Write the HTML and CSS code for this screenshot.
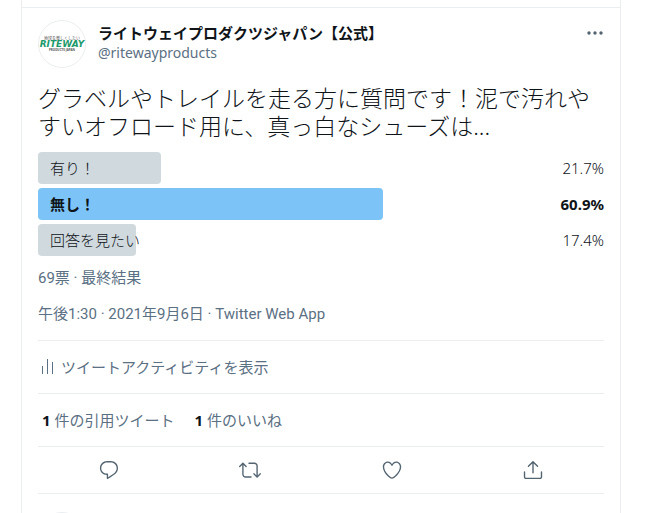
FILE: index.html
```
<!DOCTYPE html>
<html lang="ja">
<head>
    <meta charset="UTF-8">
    <meta name="viewport" content="width=device-width, initial-scale=1.0">
    <title>ツイート</title>
    <link rel="stylesheet" href="styles.css">
</head>
<body>
    <main class="timeline">
        <article class="tweet">
            <!-- Author -->
            <header class="tweet-header">
                <a href="#" class="avatar" aria-label="RITEWAY">
                    <svg viewBox="0 0 48 48">
                        <circle cx="24" cy="24" r="23.5" fill="#fff" stroke="#ebeef0"/>
                        <text class="logo-tagline" x="24" y="20" text-anchor="middle">地球を楽しくしたい</text>
                        <text class="logo-name" x="24" y="27" text-anchor="middle">RITEWAY</text>
                        <text class="logo-sub" x="24" y="31" text-anchor="middle">PRODUCTS JAPAN</text>
                    </svg>
                </a>
                <div class="author">
                    <a href="#" class="author-name">ライトウェイプロダクツジャパン【公式】</a>
                    <a href="#" class="author-handle">@ritewayproducts</a>
                </div>
                <button class="icon-btn more-btn" aria-label="もっと見る">
                    <svg viewBox="0 0 18 18">
                        <circle cx="3" cy="9" r="1.7"/>
                        <circle cx="9" cy="9" r="1.7"/>
                        <circle cx="15" cy="9" r="1.7"/>
                    </svg>
                </button>
            </header>

            <p class="tweet-text">グラベルやトレイルを走る方に質問です！泥で汚れやすいオフロード用に、真っ白なシューズは...</p>

            <!-- Poll results -->
            <div class="poll">
                <div class="poll-row">
                    <div class="poll-bar" style="width: 21.7%">有り！</div>
                    <span>21.7%</span>
                </div>
                <div class="poll-row winner">
                    <div class="poll-bar" style="width: 60.9%">無し！</div>
                    <span>60.9%</span>
                </div>
                <div class="poll-row">
                    <div class="poll-bar" style="width: 17.4%">回答を見たい</div>
                    <span>17.4%</span>
                </div>
            </div>
            <p class="meta">69票 · 最終結果</p>
            <p class="meta tweet-date"><a href="#">午後1:30 · 2021年9月6日</a> · <a href="#">Twitter Web App</a></p>

            <a href="#" class="activity">
                <svg viewBox="0 0 20 20">
                    <path d="M4.5 9v8M9.5 2v15M14.5 5v12"/>
                </svg>
                ツイートアクティビティを表示
            </a>

            <div class="stats">
                <a href="#"><strong>1</strong> 件の引用ツイート</a>
                <a href="#"><strong>1</strong> 件のいいね</a>
            </div>

            <!-- Actions -->
            <div class="actions">
                <button class="icon-btn" aria-label="返信">
                    <svg viewBox="0 0 24 24"><path d="M14.046 2.242l-4.148-.01h-.002c-4.374 0-7.8 3.427-7.8 7.802 0 4.098 3.186 7.206 7.465 7.37v3.828c0 .108.044.286.12.403.142.225.384.347.632.347.138 0 .277-.038.402-.118.264-.168 6.473-4.14 8.088-5.506 1.902-1.61 3.04-3.97 3.043-6.312v-.017c-.006-4.367-3.43-7.787-7.8-7.788zm3.787 12.972c-1.134.96-4.862 3.405-6.772 4.643V16.67c0-.414-.335-.75-.75-.75h-.396c-3.66 0-6.318-2.476-6.318-5.886 0-3.534 2.768-6.302 6.3-6.302l4.147.01h.002c3.532 0 6.3 2.766 6.302 6.296-.003 1.91-.942 3.844-2.514 5.176z"/></svg>
                </button>
                <button class="icon-btn" aria-label="リツイート">
                    <svg viewBox="0 0 24 24"><path d="M23.77 15.67c-.292-.293-.767-.293-1.06 0l-2.22 2.22V7.65c0-2.068-1.683-3.75-3.75-3.75h-5.85c-.414 0-.75.336-.75.75s.336.75.75.75h5.85c1.24 0 2.25 1.01 2.25 2.25v10.24l-2.22-2.22c-.293-.293-.768-.293-1.06 0s-.294.768 0 1.06l3.5 3.5c.145.147.337.22.53.22s.383-.072.53-.22l3.5-3.5c.294-.292.294-.767 0-1.06zm-10.66 3.28H7.26c-1.24 0-2.25-1.01-2.25-2.25V6.46l2.22 2.22c.148.147.34.22.532.22s.384-.073.53-.22c.293-.293.293-.768 0-1.06l-3.5-3.5c-.293-.294-.768-.294-1.06 0l-3.5 3.5c-.294.292-.294.767 0 1.06s.767.293 1.06 0l2.22-2.22V16.7c0 2.068 1.683 3.75 3.75 3.75h5.85c.414 0 .75-.336.75-.75s-.337-.75-.75-.75z"/></svg>
                </button>
                <button class="icon-btn" aria-label="いいね">
                    <svg viewBox="0 0 24 24"><path d="M12 21.638h-.014C9.403 21.59 1.95 14.856 1.95 8.478c0-3.064 2.525-5.754 5.403-5.754 2.29 0 3.83 1.58 4.646 2.73.814-1.148 2.354-2.73 4.645-2.73 2.88 0 5.404 2.69 5.404 5.755 0 6.376-7.454 13.11-10.037 13.157H12zM7.354 4.225c-2.08 0-3.903 1.988-3.903 4.255 0 5.74 7.034 11.596 8.55 11.658 1.518-.062 8.55-5.917 8.55-11.658 0-2.267-1.823-4.255-3.903-4.255-2.528 0-3.94 2.936-3.952 2.965-.23.562-1.156.562-1.387 0-.014-.03-1.425-2.965-3.954-2.965z"/></svg>
                </button>
                <button class="icon-btn" aria-label="共有">
                    <svg viewBox="0 0 24 24"><path d="M17.53 7.47l-5-5c-.293-.293-.768-.293-1.06 0l-5 5c-.294.293-.294.768 0 1.06s.767.294 1.06 0l3.72-3.72V15c0 .414.336.75.75.75s.75-.336.75-.75V4.81l3.72 3.72c.146.147.338.22.53.22s.384-.072.53-.22c.293-.293.293-.767 0-1.06z"/><path d="M19.708 21.944H4.292C3.028 21.944 2 20.916 2 19.652V14c0-.414.336-.75.75-.75s.75.336.75.75v5.652c0 .437.355.792.792.792h15.416c.437 0 .792-.355.792-.792V14c0-.414.336-.75.75-.75s.75.336.75.75v5.652c0 1.264-1.028 2.292-2.292 2.292z"/></svg>
                </button>
            </div>
        </article>

        <div class="reply-box">
            <div class="reply-avatar"></div>
        </div>
    </main>
</body>
</html>
```
FILE: styles.css
```
* {
    margin: 0;
    padding: 0;
    box-sizing: border-box;
}

html {
    overflow: hidden;
}

body {
    font-family: "Noto Sans", "Noto Sans CJK JP", sans-serif;
    font-size: 15px;
    line-height: 20px;
    color: #0f1419;
    background: #fff;
    padding: 0 24px 0 21px;
}

a {
    color: inherit;
    text-decoration: none;
}

.timeline {
    border: 1px solid #ebeef0;
    border-top: none;
    border-bottom: none;
    padding-top: 7px;
}

.tweet {
    border-top: 1px solid #ebeef0;
    padding: 12px 16px 0;
}

.tweet-header {
    display: flex;
    gap: 12px;
}

.avatar svg {
    display: block;
    width: 48px;
    height: 48px;
}

.logo-tagline {
    font-size: 4px;
    fill: #555;
}

.logo-name {
    font-family: "DejaVu Sans", Verdana, sans-serif;
    font-size: 9px;
    font-weight: bold;
    font-style: italic;
    fill: #1d9a6c;
}

.logo-sub {
    font-size: 3px;
    font-weight: bold;
    fill: #555;
}

.author {
    display: flex;
    flex-direction: column;
    flex: 1;
    padding-top: 3px;
}

.author-name {
    font-weight: bold;
}

.author-handle {
    font-size: 14px;
    color: #5b7083;
}

.icon-btn {
    border: none;
    background: none;
    cursor: pointer;
}

.icon-btn svg {
    display: block;
    width: 22px;
    height: 22px;
    fill: #536471;
}

.more-btn {
    align-self: flex-start;
    padding-top: 4px;
}

.more-btn svg {
    width: 18px;
    height: 18px;
}

.tweet-text {
    font-size: 23px;
    font-weight: 300;
    line-height: 28px;
    margin-top: 16px;
}

.poll {
    display: flex;
    flex-direction: column;
    gap: 4px;
    margin: 12px 0;
}

.poll-row {
    display: flex;
    align-items: center;
    justify-content: space-between;
    font-weight: 300;
}

.poll-bar {
    padding: 6px 12px;
    border-radius: 4px;
    background: #cfd9de;
    white-space: nowrap;
}

.winner {
    font-weight: bold;
}

.winner .poll-bar {
    background: #7cc4f8;
}

.meta {
    font-family: Roboto, "Noto Sans CJK JP", sans-serif;
    color: #5b7083;
}

.tweet-date {
    margin: 16px 0;
}

.activity {
    display: flex;
    align-items: center;
    gap: 3px;
    padding: 16px 0;
    border-top: 1px solid #ebeef0;
    color: #5b7083;
}

.activity svg {
    width: 20px;
    height: 20px;
    fill: none;
    stroke: #5b7083;
}

.stats {
    display: flex;
    gap: 20px;
    padding: 16px 4px;
    border-top: 1px solid #ebeef0;
    color: #5b7083;
}

.stats strong {
    color: #0f1419;
}

.actions {
    display: flex;
    justify-content: space-around;
    padding: 12px 0;
    border-top: 1px solid #ebeef0;
    border-bottom: 1px solid #ebeef0;
}

.reply-box {
    padding: 18px 16px 0;
}

.reply-avatar {
    width: 48px;
    height: 48px;
    border: 1px solid #ebeef0;
    border-radius: 50%;
}
```
